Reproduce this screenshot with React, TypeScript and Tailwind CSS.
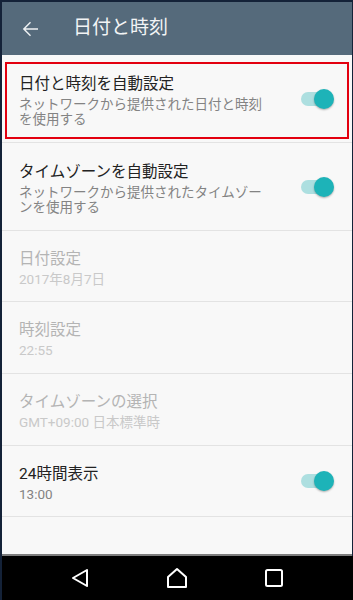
const font = { fontFamily: 'Roboto, "Noto Sans CJK JP", sans-serif' };

type RowProps = {
  title: string;
  lines: string[];
  height: string;
  disabled?: boolean;
  toggle?: boolean;
  children?: React.ReactNode;
};

const Toggle = () => (
  <div className="relative w-[34px] h-[22px] mr-[18px] flex items-center">
    <div className="w-[32px] h-[14px] rounded-full bg-[#addfe0] ml-[1px]" />
    <div className="absolute right-0 top-[1px] w-[20px] h-[20px] rounded-full bg-[#1db3b8] shadow-[0_1px_2px_rgba(0,0,0,0.3)]" />
  </div>
);

const Row = ({ title, lines, height, disabled, toggle, children }: RowProps) => (
  <div
    className={`relative flex items-center justify-between border-b border-[#e3e3e3] ${height}`}
  >
    {children}
    <div className="pl-[17px] pt-[3px]">
      <div
        className={`text-[15.5px] leading-[20px] ${disabled ? "text-[#b4b4b4]" : "text-[#222222]"}`}
      >
        {title}
      </div>
      <div
        className={`mt-[3px] text-[13.5px] leading-[15px] ${disabled ? "text-[#c9c9c9]" : "text-[#838383]"}`}
      >
        {lines.map((l) => (
          <div key={l}>{l}</div>
        ))}
      </div>
    </div>
    {toggle && <Toggle />}
  </div>
);

export default function App() {
  return (
    <div
      className="w-[353px] h-[600px] bg-[#142238] pl-[2px] pr-[1px] pt-[2px] flex flex-col overflow-hidden"
      style={font}
    >
      {/* app bar */}
      <div className="h-[53px] bg-[#556a7b] flex items-center shrink-0">
        <svg viewBox="0 0 24 24" className="w-[24px] h-[24px] ml-[16px]" fill="#eef1f3">
          <path d="M20 11.2H7.6l5.4-5.4L12 4.8 4.8 12l7.2 7.2 1-1-5.4-5.4H20z" />
        </svg>
        <span className="ml-[31px] text-[19px] text-[#f2f4f5]">日付と時刻</span>
      </div>

      {/* list */}
      <div className="flex-1 bg-[#f8f8f8] flex flex-col border-b-2 border-[#7d7d7d]">
        <Row
          title="日付と時刻を自動設定"
          lines={["ネットワークから提供された日付と時刻", "を使用する"]}
          height="h-[88px]"
          toggle
        >
          <div className="absolute left-[3px] right-[3px] top-[7px] bottom-[3px] border-[2.5px] border-[#e3000f]" />
        </Row>
        <Row
          title="タイムゾーンを自動設定"
          lines={["ネットワークから提供されたタイムゾー", "ンを使用する"]}
          height="h-[88px]"
          toggle
        />
        <Row title="日付設定" lines={["2017年8月7日"]} height="h-[71px]" disabled />
        <Row title="時刻設定" lines={["22:55"]} height="h-[72px]" disabled />
        <Row
          title="タイムゾーンの選択"
          lines={["GMT+09:00 日本標準時"]}
          height="h-[72px]"
          disabled
        />
        <Row title="24時間表示" lines={["13:00"]} height="h-[71px]" toggle />
      </div>

      {/* nav bar */}
      <div className="h-[44px] bg-black flex items-center shrink-0 -mr-[1px]">
        <svg viewBox="0 0 18 20" className="w-[18px] h-[20px] ml-[69px]" fill="none" stroke="#fff" strokeWidth="2" strokeLinejoin="round">
          <path d="M16 2 L2 10 L16 18 Z" />
        </svg>
        <svg viewBox="0 0 22 22" className="w-[22px] h-[22px] ml-[77px]" fill="none" stroke="#fff" strokeWidth="2" strokeLinejoin="round">
          <path d="M2 10 L11 2 L20 10 L20 20 L2 20 Z" />
        </svg>
        <svg viewBox="0 0 18 18" className="w-[18px] h-[18px] ml-[77px]" fill="none" stroke="#fff" strokeWidth="2">
          <rect x="1" y="1" width="16" height="16" rx="1.5" />
        </svg>
      </div>
    </div>
  );
}
